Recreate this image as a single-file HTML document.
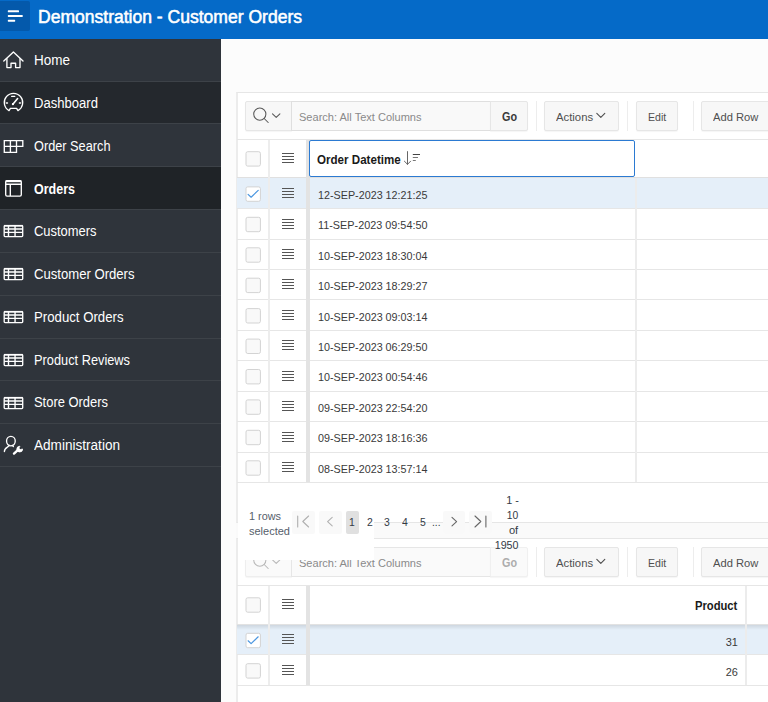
<!DOCTYPE html>
<html lang="en"><head><meta charset="utf-8"><title>Demonstration - Customer Orders</title><style>
html,body{margin:0;padding:0;width:768px;height:702px;overflow:hidden;background:#fcfcfc}
#app{width:768px;height:702px;overflow:hidden;position:relative;background:#fcfcfc;font-family:"Liberation Sans",sans-serif}
.b{position:absolute;display:block}
.t{position:absolute;white-space:pre;display:block}
</style></head>
<body>
<div id="app">
<div class="b" style="left:0px;top:0px;width:768px;height:39px;background:#056ac8"></div>
<div class="b" style="left:0px;top:1px;width:30px;height:30px;background:#0459ab;border-radius:0 2px 2px 0"></div>
<svg class="b" style="left:0;top:0" width="30" height="32" viewBox="0 0 30 32" fill="#fff"><rect x="7.8" y="10.35" width="11.2" height="1.9" rx="0.6"/><rect x="7.8" y="15.05" width="15" height="1.9" rx="0.6"/><rect x="7.8" y="19.8" width="7.4" height="1.9" rx="0.6"/></svg>
<span class="t" style="left:38.2px;transform-origin:0 50%;top:4.80px;font-size:18px;line-height:25px;color:#fff;transform:scaleX(0.9738);-webkit-text-stroke:0.55px #fff;">Demonstration - Customer Orders</span>
<div class="b" style="left:0px;top:39px;width:221px;height:663px;background:#2f343b"></div>
<div class="b" style="left:0px;top:82px;width:221px;height:41px;background:#24282d"></div>
<div class="b" style="left:0px;top:167px;width:221px;height:42px;background:#1f2327"></div>
<div class="b" style="left:0px;top:81px;width:221px;height:1px;background:#3d4248"></div>
<div class="b" style="left:0px;top:123px;width:221px;height:1px;background:#3d4248"></div>
<div class="b" style="left:0px;top:166px;width:221px;height:1px;background:#3d4248"></div>
<div class="b" style="left:0px;top:209px;width:221px;height:1px;background:#3d4248"></div>
<div class="b" style="left:0px;top:252px;width:221px;height:1px;background:#3d4248"></div>
<div class="b" style="left:0px;top:295px;width:221px;height:1px;background:#3d4248"></div>
<div class="b" style="left:0px;top:338px;width:221px;height:1px;background:#3d4248"></div>
<div class="b" style="left:0px;top:380px;width:221px;height:1px;background:#3d4248"></div>
<div class="b" style="left:0px;top:423px;width:221px;height:1px;background:#3d4248"></div>
<div class="b" style="left:0px;top:466px;width:221px;height:1px;background:#3d4248"></div>
<span class="t" style="left:33.8px;transform-origin:0 50%;top:50.40px;font-size:14px;line-height:20px;color:#fff;transform:scaleX(0.9636);">Home</span>
<span class="t" style="left:33.8px;transform-origin:0 50%;top:92.80px;font-size:14px;line-height:20px;color:#fff;transform:scaleX(0.9343);">Dashboard</span>
<span class="t" style="left:33.8px;transform-origin:0 50%;top:135.60px;font-size:14px;line-height:20px;color:#fff;transform:scaleX(0.9102);">Order Search</span>
<span class="t" style="left:33.8px;transform-origin:0 50%;top:178.60px;font-size:14px;line-height:20px;color:#fff;font-weight:bold;transform:scaleX(0.8928);">Orders</span>
<span class="t" style="left:33.8px;transform-origin:0 50%;top:221.20px;font-size:14px;line-height:20px;color:#fff;transform:scaleX(0.9234);">Customers</span>
<span class="t" style="left:33.8px;transform-origin:0 50%;top:264.00px;font-size:14px;line-height:20px;color:#fff;transform:scaleX(0.9361);">Customer Orders</span>
<span class="t" style="left:33.8px;transform-origin:0 50%;top:306.80px;font-size:14px;line-height:20px;color:#fff;transform:scaleX(0.9427);">Product Orders</span>
<span class="t" style="left:33.8px;transform-origin:0 50%;top:349.60px;font-size:14px;line-height:20px;color:#fff;transform:scaleX(0.9139);">Product Reviews</span>
<span class="t" style="left:33.8px;transform-origin:0 50%;top:392.40px;font-size:14px;line-height:20px;color:#fff;transform:scaleX(0.9234);">Store Orders</span>
<span class="t" style="left:33.8px;transform-origin:0 50%;top:435.00px;font-size:14px;line-height:20px;color:#fff;transform:scaleX(0.9695);">Administration</span>
<svg class="b" style="left:0px;top:46px" width="30" height="30" viewBox="0 0 30 30" fill="none" stroke="#fff" stroke-width="1.35" stroke-linecap="round" stroke-linejoin="round" ><path d="M3.8 15 L13.4 6 L23 15"/><path d="M6.9 12.6 V21.6 H11 V17.2 H15.6 V21.6 H20 V12.6"/></svg>
<svg class="b" style="left:0px;top:88px" width="30" height="30" viewBox="0 0 30 30" fill="none" stroke="#fff" stroke-width="1.35" stroke-linecap="round" stroke-linejoin="round" ><path d="M9 22.6 A9.2 9.2 0 1 1 18 22.6 L16.6 20.3 H10.4 Z"/><path d="M12.9 16.2 L17.6 10.6" stroke-width="1.6"/><circle cx="12.9" cy="16.2" r="1.1" fill="#fff" stroke="none"/><path d="M11.7 8.4 H14.7 M6.4 15 H7.5 M19.4 15 H20.5"/></svg>
<svg class="b" style="left:0px;top:131px" width="30" height="30" viewBox="0 0 30 30" fill="none" stroke="#fff" stroke-width="1.35" stroke-linecap="round" stroke-linejoin="round" ><path d="M4.3 9.6 H22.8 V15.3 H16.5 V21.4 H4.3 Z M4.3 15.3 H16.5 M10.4 9.6 V21.4 M16.5 9.6 V15.3" stroke-linejoin="miter"/></svg>
<svg class="b" style="left:0px;top:174px" width="30" height="30" viewBox="0 0 30 30" fill="none" stroke="#fff" stroke-width="1.35" stroke-linecap="round" stroke-linejoin="round" ><rect x="5.7" y="6.7" width="15.6" height="15.4" rx="1.4"/><path d="M5.7 7.2 H21.3" stroke-width="2" stroke-linecap="butt"/><path d="M5.7 10.2 H21.3 M10.3 10.2 V22" stroke-linecap="butt"/></svg>
<svg class="b" style="left:0px;top:216.4px" width="30" height="30" viewBox="0 0 30 30" fill="none" stroke="#fff" stroke-width="1.35" stroke-linecap="round" stroke-linejoin="round" ><rect x="4.2" y="9.6" width="18.5" height="11" rx="0.8"/><path d="M4.2 9.75 H22.7" stroke-width="1.7" stroke-linecap="butt"/><path d="M4.2 13.05 H22.7 M4.2 16.35 H22.7 M8.5 9.6 V20.6 M15.05 9.6 V20.6" stroke-linecap="butt" stroke-width="1.4"/></svg>
<svg class="b" style="left:0px;top:259.2px" width="30" height="30" viewBox="0 0 30 30" fill="none" stroke="#fff" stroke-width="1.35" stroke-linecap="round" stroke-linejoin="round" ><rect x="4.2" y="9.6" width="18.5" height="11" rx="0.8"/><path d="M4.2 9.75 H22.7" stroke-width="1.7" stroke-linecap="butt"/><path d="M4.2 13.05 H22.7 M4.2 16.35 H22.7 M8.5 9.6 V20.6 M15.05 9.6 V20.6" stroke-linecap="butt" stroke-width="1.4"/></svg>
<svg class="b" style="left:0px;top:302px" width="30" height="30" viewBox="0 0 30 30" fill="none" stroke="#fff" stroke-width="1.35" stroke-linecap="round" stroke-linejoin="round" ><rect x="4.2" y="9.6" width="18.5" height="11" rx="0.8"/><path d="M4.2 9.75 H22.7" stroke-width="1.7" stroke-linecap="butt"/><path d="M4.2 13.05 H22.7 M4.2 16.35 H22.7 M8.5 9.6 V20.6 M15.05 9.6 V20.6" stroke-linecap="butt" stroke-width="1.4"/></svg>
<svg class="b" style="left:0px;top:344.8px" width="30" height="30" viewBox="0 0 30 30" fill="none" stroke="#fff" stroke-width="1.35" stroke-linecap="round" stroke-linejoin="round" ><rect x="4.2" y="9.6" width="18.5" height="11" rx="0.8"/><path d="M4.2 9.75 H22.7" stroke-width="1.7" stroke-linecap="butt"/><path d="M4.2 13.05 H22.7 M4.2 16.35 H22.7 M8.5 9.6 V20.6 M15.05 9.6 V20.6" stroke-linecap="butt" stroke-width="1.4"/></svg>
<svg class="b" style="left:0px;top:387.5px" width="30" height="30" viewBox="0 0 30 30" fill="none" stroke="#fff" stroke-width="1.35" stroke-linecap="round" stroke-linejoin="round" ><rect x="4.2" y="9.6" width="18.5" height="11" rx="0.8"/><path d="M4.2 9.75 H22.7" stroke-width="1.7" stroke-linecap="butt"/><path d="M4.2 13.05 H22.7 M4.2 16.35 H22.7 M8.5 9.6 V20.6 M15.05 9.6 V20.6" stroke-linecap="butt" stroke-width="1.4"/></svg>
<svg class="b" style="left:0px;top:430px" width="30" height="30" viewBox="0 0 30 30" fill="none" stroke="#fff" stroke-width="1.35" stroke-linecap="round" stroke-linejoin="round" ><ellipse cx="10.9" cy="11.1" rx="4.35" ry="4.75"/><path d="M9.2 15.4 C8.6 17.4 4.4 17.2 4.4 21.6"/><path d="M12.4 15.4 L13.4 16.6"/><path d="M14 23.6 L18.6 19.4" stroke-width="2.4"/><path d="M19.6 16.2 A2.9 2.9 0 1 0 22.6 19 L20.2 19.6 L19 18.4 Z" fill="#fff" stroke-width="0.8"/></svg>
<div class="b" style="left:221px;top:39px;width:547px;height:663px;background:#fcfcfc"></div>
<div class="b" style="left:236px;top:92px;width:540px;height:431px;background:#fff;border:1px solid #e6e6e6;border-left:2px solid #ececec;box-sizing:border-box"></div>
<div class="b" style="left:236px;top:523px;width:540px;height:15px;background:#fafafa"></div>
<div class="b" style="left:236px;top:538px;width:540px;height:200px;background:#fff;border:1px solid #e6e6e6;border-left:2px solid #ececec;box-sizing:border-box"></div>
<div class="b" style="left:245px;top:101px;width:47px;height:30px;background:#f7f7f7;border:1px solid #e6e6e6;box-sizing:border-box;box-shadow:0 1px 1px rgba(0,0,0,.04);border-radius:2px 0 0 2px"></div>
<div class="b" style="left:291px;top:101px;width:200px;height:30px;background:#f9f9f9;border:1px solid #dfdfdf;box-sizing:border-box"></div>
<div class="b" style="left:490px;top:101px;width:38px;height:30px;background:#f7f7f7;border:1px solid #e6e6e6;box-sizing:border-box;box-shadow:0 1px 1px rgba(0,0,0,.04);border-radius:0 2px 2px 0"></div>
<svg class="b" style="left:245px;top:101px" width="47" height="30" viewBox="0 0 47 30" fill="none" stroke="#585858" stroke-width="1.05" stroke-linecap="round" stroke-linejoin="round"><circle cx="14.8" cy="13.1" r="6.1"/><path d="M19.2 17.5 L23.2 21.5"/><path d="M27.5 12.8 L31.2 16.4 L34.9 12.8"/></svg>
<span class="t" style="left:298.7px;transform-origin:0 50%;top:109.40px;font-size:11.6px;line-height:16px;color:#8a8a8a;transform:scaleX(0.9520);">Search: All Text Columns</span>
<span class="t" style="left:501.5px;transform-origin:0 50%;top:108.80px;font-size:12px;line-height:17px;color:#3a3a3a;font-weight:bold;transform:scaleX(0.8997);">Go</span>
<div class="b" style="left:536px;top:101px;width:1px;height:30px;background:#ededed"></div>
<div class="b" style="left:627px;top:101px;width:1px;height:30px;background:#ededed"></div>
<div class="b" style="left:693px;top:101px;width:1px;height:30px;background:#ededed"></div>
<div class="b" style="left:544px;top:101px;width:75px;height:30px;background:#f7f7f7;border:1px solid #e6e6e6;box-sizing:border-box;box-shadow:0 1px 1px rgba(0,0,0,.04);border-radius:2px"></div>
<span class="t" style="left:555.8px;transform-origin:0 50%;top:109.40px;font-size:11.6px;line-height:16px;color:#4f4f4f;transform:scaleX(0.9755);">Actions</span>
<svg class="b" style="left:595px;top:110px" width="12" height="12" viewBox="0 0 12 12" fill="none" stroke="#4d4d4d" stroke-width="1.1" stroke-linecap="round" stroke-linejoin="round"><path d="M1.8 3.4 L5.8 7.4 L9.8 3.4"/></svg>
<div class="b" style="left:636px;top:101px;width:42px;height:30px;background:#f7f7f7;border:1px solid #e6e6e6;box-sizing:border-box;box-shadow:0 1px 1px rgba(0,0,0,.04);border-radius:2px"></div>
<span class="t" style="left:647.7px;transform-origin:0 50%;top:109.40px;font-size:11.6px;line-height:16px;color:#4f4f4f;transform:scaleX(0.9107);">Edit</span>
<div class="b" style="left:701px;top:101px;width:80px;height:30px;background:#f7f7f7;border:1px solid #e6e6e6;box-sizing:border-box;box-shadow:0 1px 1px rgba(0,0,0,.04);border-radius:2px"></div>
<span class="t" style="left:713.3px;transform-origin:0 50%;top:109.40px;font-size:11.6px;line-height:16px;color:#4f4f4f;transform:scaleX(0.9629);">Add Row</span>
<div class="b" style="left:237px;top:139px;width:540px;height:1px;background:#e6e6e6"></div>
<div class="b" style="left:237px;top:177px;width:540px;height:1px;background:#e0e0e0"></div>
<div class="b" style="left:237px;top:178px;width:540px;height:30px;background:#e5eff9"></div>
<div class="b" style="left:237px;top:208px;width:540px;height:1px;background:#e6e6e6"></div>
<div class="b" style="left:237px;top:239px;width:540px;height:1px;background:#e6e6e6"></div>
<div class="b" style="left:237px;top:269px;width:540px;height:1px;background:#e6e6e6"></div>
<div class="b" style="left:237px;top:299px;width:540px;height:1px;background:#e6e6e6"></div>
<div class="b" style="left:237px;top:330px;width:540px;height:1px;background:#e6e6e6"></div>
<div class="b" style="left:237px;top:360px;width:540px;height:1px;background:#e6e6e6"></div>
<div class="b" style="left:237px;top:391px;width:540px;height:1px;background:#e6e6e6"></div>
<div class="b" style="left:237px;top:421px;width:540px;height:1px;background:#e6e6e6"></div>
<div class="b" style="left:237px;top:452px;width:540px;height:1px;background:#e6e6e6"></div>
<div class="b" style="left:237px;top:482px;width:540px;height:1px;background:#e6e6e6"></div>
<div class="b" style="left:268px;top:140px;width:2px;height:342px;background:#ededed"></div>
<div class="b" style="left:306px;top:140px;width:4px;height:342px;background:#e3e3e3"></div>
<div class="b" style="left:635px;top:178px;width:2px;height:304px;background:#ececec"></div>
<div class="b" style="left:309px;top:140px;width:326px;height:37px;background:#fff;border:1px solid #2b7ad2;border-radius:2px;box-sizing:border-box"></div>
<svg class="b" style="left:244px;top:150px" width="19" height="19" viewBox="0 0 19 19"><rect x="2.00" y="1.70" width="14.4" height="14.4" rx="1.7" fill="#f9f9f9" stroke="#d3d3d3" stroke-width="1"/></svg>
<div class="b" style="left:282px;top:153px;width:12px;height:1px;background:#555"></div><div class="b" style="left:282px;top:156px;width:12px;height:1px;background:#555"></div><div class="b" style="left:282px;top:159px;width:12px;height:1px;background:#555"></div><div class="b" style="left:282px;top:162px;width:12px;height:1px;background:#555"></div>
<span class="t" style="left:317px;transform-origin:0 50%;top:151.50px;font-size:12px;line-height:17px;color:#1a1a1a;font-weight:bold;transform:scaleX(0.9654);">Order Datetime</span>
<svg class="b" style="left:402px;top:151px" width="20" height="15" viewBox="0 0 20 15" fill="none" stroke="#666" stroke-width="1" stroke-linecap="round" stroke-linejoin="round"><path d="M5.5 0.6 V13.3 M2.4 10.2 L5.5 13.3 L8.6 10.2"/><path d="M11.2 3.5 H17.6" stroke="#444"/><path d="M11.2 6.5 H15.6 M11.2 9.5 H13.4" stroke="#777"/></svg>
<svg class="b" style="left:244px;top:185px" width="19" height="19" viewBox="0 0 19 19"><rect x="2.00" y="1.90" width="14.4" height="14.4" rx="1.7" fill="#fff" stroke="#d3d3d3" stroke-width="1"/><path transform="translate(1.50,1.40)" d="M2.6 8.0 L5.6 10.8 L12.7 4.0" fill="none" stroke="#4a96e0" stroke-width="1.2" stroke-linecap="round" stroke-linejoin="round"/></svg>
<div class="b" style="left:282px;top:188px;width:12px;height:1px;background:#555"></div><div class="b" style="left:282px;top:191px;width:12px;height:1px;background:#555"></div><div class="b" style="left:282px;top:194px;width:12px;height:1px;background:#555"></div><div class="b" style="left:282px;top:197px;width:12px;height:1px;background:#555"></div>
<span class="t" style="left:318.4px;transform-origin:0 50%;top:186.80px;font-size:11.6px;line-height:16px;color:#3a3a3a;transform:scaleX(0.9282);">12-SEP-2023 12:21:25</span>
<svg class="b" style="left:244px;top:215px" width="19" height="19" viewBox="0 0 19 19"><rect x="2.00" y="2.30" width="14.4" height="14.4" rx="1.7" fill="#f9f9f9" stroke="#d3d3d3" stroke-width="1"/></svg>
<div class="b" style="left:282px;top:219px;width:12px;height:1px;background:#555"></div><div class="b" style="left:282px;top:222px;width:12px;height:1px;background:#555"></div><div class="b" style="left:282px;top:225px;width:12px;height:1px;background:#555"></div><div class="b" style="left:282px;top:228px;width:12px;height:1px;background:#555"></div>
<span class="t" style="left:318.4px;transform-origin:0 50%;top:217.23px;font-size:11.6px;line-height:16px;color:#3a3a3a;transform:scaleX(0.9350);">11-SEP-2023 09:54:50</span>
<svg class="b" style="left:244px;top:246px" width="19" height="19" viewBox="0 0 19 19"><rect x="2.00" y="1.80" width="14.4" height="14.4" rx="1.7" fill="#f9f9f9" stroke="#d3d3d3" stroke-width="1"/></svg>
<div class="b" style="left:282px;top:249px;width:12px;height:1px;background:#555"></div><div class="b" style="left:282px;top:252px;width:12px;height:1px;background:#555"></div><div class="b" style="left:282px;top:255px;width:12px;height:1px;background:#555"></div><div class="b" style="left:282px;top:258px;width:12px;height:1px;background:#555"></div>
<span class="t" style="left:318.4px;transform-origin:0 50%;top:247.66px;font-size:11.6px;line-height:16px;color:#3a3a3a;transform:scaleX(0.9282);">10-SEP-2023 18:30:04</span>
<svg class="b" style="left:244px;top:276px" width="19" height="19" viewBox="0 0 19 19"><rect x="2.00" y="2.20" width="14.4" height="14.4" rx="1.7" fill="#f9f9f9" stroke="#d3d3d3" stroke-width="1"/></svg>
<div class="b" style="left:282px;top:279px;width:12px;height:1px;background:#555"></div><div class="b" style="left:282px;top:282px;width:12px;height:1px;background:#555"></div><div class="b" style="left:282px;top:285px;width:12px;height:1px;background:#555"></div><div class="b" style="left:282px;top:288px;width:12px;height:1px;background:#555"></div>
<span class="t" style="left:318.4px;transform-origin:0 50%;top:278.09px;font-size:11.6px;line-height:16px;color:#3a3a3a;transform:scaleX(0.9282);">10-SEP-2023 18:29:27</span>
<svg class="b" style="left:244px;top:307px" width="19" height="19" viewBox="0 0 19 19"><rect x="2.00" y="1.60" width="14.4" height="14.4" rx="1.7" fill="#f9f9f9" stroke="#d3d3d3" stroke-width="1"/></svg>
<div class="b" style="left:282px;top:310px;width:12px;height:1px;background:#555"></div><div class="b" style="left:282px;top:313px;width:12px;height:1px;background:#555"></div><div class="b" style="left:282px;top:316px;width:12px;height:1px;background:#555"></div><div class="b" style="left:282px;top:319px;width:12px;height:1px;background:#555"></div>
<span class="t" style="left:318.4px;transform-origin:0 50%;top:308.52px;font-size:11.6px;line-height:16px;color:#3a3a3a;transform:scaleX(0.9282);">10-SEP-2023 09:03:14</span>
<svg class="b" style="left:244px;top:337px" width="19" height="19" viewBox="0 0 19 19"><rect x="2.00" y="2.10" width="14.4" height="14.4" rx="1.7" fill="#f9f9f9" stroke="#d3d3d3" stroke-width="1"/></svg>
<div class="b" style="left:282px;top:340px;width:12px;height:1px;background:#555"></div><div class="b" style="left:282px;top:343px;width:12px;height:1px;background:#555"></div><div class="b" style="left:282px;top:346px;width:12px;height:1px;background:#555"></div><div class="b" style="left:282px;top:349px;width:12px;height:1px;background:#555"></div>
<span class="t" style="left:318.4px;transform-origin:0 50%;top:338.95px;font-size:11.6px;line-height:16px;color:#3a3a3a;transform:scaleX(0.9282);">10-SEP-2023 06:29:50</span>
<svg class="b" style="left:244px;top:368px" width="19" height="19" viewBox="0 0 19 19"><rect x="2.00" y="1.50" width="14.4" height="14.4" rx="1.7" fill="#f9f9f9" stroke="#d3d3d3" stroke-width="1"/></svg>
<div class="b" style="left:282px;top:371px;width:12px;height:1px;background:#555"></div><div class="b" style="left:282px;top:374px;width:12px;height:1px;background:#555"></div><div class="b" style="left:282px;top:377px;width:12px;height:1px;background:#555"></div><div class="b" style="left:282px;top:380px;width:12px;height:1px;background:#555"></div>
<span class="t" style="left:318.4px;transform-origin:0 50%;top:369.38px;font-size:11.6px;line-height:16px;color:#3a3a3a;transform:scaleX(0.9282);">10-SEP-2023 00:54:46</span>
<svg class="b" style="left:244px;top:398px" width="19" height="19" viewBox="0 0 19 19"><rect x="2.00" y="1.90" width="14.4" height="14.4" rx="1.7" fill="#f9f9f9" stroke="#d3d3d3" stroke-width="1"/></svg>
<div class="b" style="left:282px;top:401px;width:12px;height:1px;background:#555"></div><div class="b" style="left:282px;top:404px;width:12px;height:1px;background:#555"></div><div class="b" style="left:282px;top:407px;width:12px;height:1px;background:#555"></div><div class="b" style="left:282px;top:410px;width:12px;height:1px;background:#555"></div>
<span class="t" style="left:318.4px;transform-origin:0 50%;top:399.81px;font-size:11.6px;line-height:16px;color:#3a3a3a;transform:scaleX(0.9282);">09-SEP-2023 22:54:20</span>
<svg class="b" style="left:244px;top:428px" width="19" height="19" viewBox="0 0 19 19"><rect x="2.00" y="2.30" width="14.4" height="14.4" rx="1.7" fill="#f9f9f9" stroke="#d3d3d3" stroke-width="1"/></svg>
<div class="b" style="left:282px;top:432px;width:12px;height:1px;background:#555"></div><div class="b" style="left:282px;top:435px;width:12px;height:1px;background:#555"></div><div class="b" style="left:282px;top:438px;width:12px;height:1px;background:#555"></div><div class="b" style="left:282px;top:441px;width:12px;height:1px;background:#555"></div>
<span class="t" style="left:318.4px;transform-origin:0 50%;top:430.24px;font-size:11.6px;line-height:16px;color:#3a3a3a;transform:scaleX(0.9282);">09-SEP-2023 18:16:36</span>
<svg class="b" style="left:244px;top:459px" width="19" height="19" viewBox="0 0 19 19"><rect x="2.00" y="1.80" width="14.4" height="14.4" rx="1.7" fill="#f9f9f9" stroke="#d3d3d3" stroke-width="1"/></svg>
<div class="b" style="left:282px;top:462px;width:12px;height:1px;background:#555"></div><div class="b" style="left:282px;top:465px;width:12px;height:1px;background:#555"></div><div class="b" style="left:282px;top:468px;width:12px;height:1px;background:#555"></div><div class="b" style="left:282px;top:471px;width:12px;height:1px;background:#555"></div>
<span class="t" style="left:318.4px;transform-origin:0 50%;top:460.67px;font-size:11.6px;line-height:16px;color:#3a3a3a;transform:scaleX(0.9282);">08-SEP-2023 13:57:14</span>
<div class="b" style="left:245px;top:547px;width:47px;height:30px;background:#fafafa;border:1px solid #eeeeee;box-sizing:border-box;box-shadow:0 1px 1px rgba(0,0,0,.04);border-radius:2px 0 0 2px"></div>
<div class="b" style="left:291px;top:547px;width:200px;height:30px;background:#fafafa;border:1px solid #e6e6e6;box-sizing:border-box"></div>
<div class="b" style="left:490px;top:547px;width:38px;height:30px;background:#fafafa;border:1px solid #f0f0f0;box-sizing:border-box;box-shadow:0 1px 1px rgba(0,0,0,.04);border-radius:0 2px 2px 0"></div>
<svg class="b" style="left:245px;top:547px" width="47" height="30" viewBox="0 0 47 30" fill="none" stroke="#b8b8b8" stroke-width="1.05" stroke-linecap="round" stroke-linejoin="round"><circle cx="14.8" cy="13.1" r="6.1"/><path d="M19.2 17.5 L23.2 21.5"/><path d="M27.5 12.8 L31.2 16.4 L34.9 12.8"/></svg>
<span class="t" style="left:298.7px;transform-origin:0 50%;top:555.40px;font-size:11.6px;line-height:16px;color:#8a8a8a;transform:scaleX(0.9520);">Search: All Text Columns</span>
<span class="t" style="left:501.5px;transform-origin:0 50%;top:554.80px;font-size:12px;line-height:17px;color:#adadad;font-weight:bold;transform:scaleX(0.8997);">Go</span>
<div class="b" style="left:536px;top:547px;width:1px;height:30px;background:#ededed"></div>
<div class="b" style="left:627px;top:547px;width:1px;height:30px;background:#ededed"></div>
<div class="b" style="left:693px;top:547px;width:1px;height:30px;background:#ededed"></div>
<div class="b" style="left:544px;top:547px;width:75px;height:30px;background:#f7f7f7;border:1px solid #e6e6e6;box-sizing:border-box;box-shadow:0 1px 1px rgba(0,0,0,.04);border-radius:2px"></div>
<span class="t" style="left:555.8px;transform-origin:0 50%;top:555.40px;font-size:11.6px;line-height:16px;color:#4f4f4f;transform:scaleX(0.9755);">Actions</span>
<svg class="b" style="left:595px;top:556px" width="12" height="12" viewBox="0 0 12 12" fill="none" stroke="#4d4d4d" stroke-width="1.1" stroke-linecap="round" stroke-linejoin="round"><path d="M1.8 3.4 L5.8 7.4 L9.8 3.4"/></svg>
<div class="b" style="left:636px;top:547px;width:42px;height:30px;background:#f7f7f7;border:1px solid #e6e6e6;box-sizing:border-box;box-shadow:0 1px 1px rgba(0,0,0,.04);border-radius:2px"></div>
<span class="t" style="left:647.7px;transform-origin:0 50%;top:555.40px;font-size:11.6px;line-height:16px;color:#4f4f4f;transform:scaleX(0.9107);">Edit</span>
<div class="b" style="left:701px;top:547px;width:80px;height:30px;background:#f7f7f7;border:1px solid #e6e6e6;box-sizing:border-box;box-shadow:0 1px 1px rgba(0,0,0,.04);border-radius:2px"></div>
<span class="t" style="left:713.3px;transform-origin:0 50%;top:555.40px;font-size:11.6px;line-height:16px;color:#4f4f4f;transform:scaleX(0.9629);">Add Row</span>
<div class="b" style="left:237px;top:585px;width:540px;height:1px;background:#e6e6e6"></div>
<div class="b" style="left:237px;top:624px;width:540px;height:1px;background:#e2e2e2"></div>
<div class="b" style="left:237px;top:625px;width:540px;height:30px;background:#e5eff9"></div>
<div class="b" style="left:237px;top:625px;width:540px;height:5px;background:linear-gradient(rgba(0,0,0,.10),rgba(0,0,0,0))"></div>
<div class="b" style="left:237px;top:654px;width:540px;height:1px;background:#e6e6e6"></div>
<div class="b" style="left:237px;top:685px;width:540px;height:1px;background:#e6e6e6"></div>
<div class="b" style="left:268px;top:586px;width:2px;height:99px;background:#ededed"></div>
<div class="b" style="left:306px;top:586px;width:4px;height:99px;background:#e3e3e3"></div>
<div class="b" style="left:745px;top:586px;width:2px;height:99px;background:#ececec"></div>
<svg class="b" style="left:244px;top:596px" width="19" height="19" viewBox="0 0 19 19"><rect x="2.00" y="1.80" width="14.4" height="14.4" rx="1.7" fill="#f9f9f9" stroke="#d3d3d3" stroke-width="1"/></svg>
<div class="b" style="left:282px;top:599px;width:12px;height:1px;background:#555"></div><div class="b" style="left:282px;top:602px;width:12px;height:1px;background:#555"></div><div class="b" style="left:282px;top:605px;width:12px;height:1px;background:#555"></div><div class="b" style="left:282px;top:608px;width:12px;height:1px;background:#555"></div>
<svg class="b" style="left:244px;top:631px" width="19" height="19" viewBox="0 0 19 19"><rect x="2.00" y="2.30" width="14.4" height="14.4" rx="1.7" fill="#fff" stroke="#d3d3d3" stroke-width="1"/><path transform="translate(1.50,1.80)" d="M2.6 8.0 L5.6 10.8 L12.7 4.0" fill="none" stroke="#4a96e0" stroke-width="1.2" stroke-linecap="round" stroke-linejoin="round"/></svg>
<div class="b" style="left:282px;top:634px;width:12px;height:1px;background:#555"></div><div class="b" style="left:282px;top:637px;width:12px;height:1px;background:#555"></div><div class="b" style="left:282px;top:640px;width:12px;height:1px;background:#555"></div><div class="b" style="left:282px;top:643px;width:12px;height:1px;background:#555"></div>
<svg class="b" style="left:244px;top:662px" width="19" height="19" viewBox="0 0 19 19"><rect x="2.00" y="1.70" width="14.4" height="14.4" rx="1.7" fill="#f9f9f9" stroke="#d3d3d3" stroke-width="1"/></svg>
<div class="b" style="left:282px;top:665px;width:12px;height:1px;background:#555"></div><div class="b" style="left:282px;top:668px;width:12px;height:1px;background:#555"></div><div class="b" style="left:282px;top:671px;width:12px;height:1px;background:#555"></div><div class="b" style="left:282px;top:674px;width:12px;height:1px;background:#555"></div>
<span class="t" style="right:30.299999999999955px;transform-origin:100% 50%;top:598.00px;font-size:12px;line-height:17px;color:#1a1a1a;font-weight:bold;transform:scaleX(0.9351);">Product</span>
<span class="t" style="right:30.5px;transform-origin:100% 50%;top:633.50px;font-size:11.6px;line-height:16px;color:#3a3a3a;transform:scaleX(0.9453);">31</span>
<span class="t" style="right:30.5px;transform-origin:100% 50%;top:663.70px;font-size:11.6px;line-height:16px;color:#3a3a3a;transform:scaleX(0.9453);">26</span>
<div class="b" style="left:238px;top:484px;width:136px;height:76px;background:#fff"></div>
<div class="b" style="left:374px;top:484px;width:402px;height:38px;background:#fff"></div>
<div class="b" style="left:374px;top:522px;width:402px;height:1px;background:#e6e6e6"></div>
<span class="t" style="left:248.5px;transform-origin:0 50%;top:508.60px;font-size:11px;line-height:15px;color:#56606b;transform:scaleX(0.9875);">1 rows</span>
<span class="t" style="left:248.5px;transform-origin:0 50%;top:523.70px;font-size:11px;line-height:15px;color:#56606b;transform:scaleX(1.0004);">selected</span>
<div class="b" style="left:292px;top:511px;width:23px;height:23px;background:#f9f9f9;border-radius:2px"></div>
<div class="b" style="left:319px;top:511px;width:23px;height:23px;background:#f9f9f9;border-radius:2px"></div>
<div class="b" style="left:345.5px;top:511px;width:13.5px;height:22.5px;background:#e0e0e0;border-radius:2px"></div>
<div class="b" style="left:442.7px;top:511px;width:22.5px;height:22.5px;background:#f9f9f9;border-radius:2px"></div>
<div class="b" style="left:469.4px;top:511px;width:22.5px;height:22.5px;background:#f9f9f9;border-radius:2px"></div>
<svg class="b" style="left:292px;top:511px" width="23" height="23" viewBox="0 0 23 23" fill="none" stroke="#b0b0b0" stroke-width="1.1" stroke-linecap="round" stroke-linejoin="round"><path d="M5.7 5 V16 M16.6 5 L10.8 10.5 L16.6 16"/></svg>
<svg class="b" style="left:319px;top:511px" width="23" height="23" viewBox="0 0 23 23" fill="none" stroke="#b0b0b0" stroke-width="1.1" stroke-linecap="round" stroke-linejoin="round"><path d="M13.2 6.3 L8.6 10.6 L13.2 14.9"/></svg>
<svg class="b" style="left:442.7px;top:511px" width="23" height="23" viewBox="0 0 23 23" fill="none" stroke="#666" stroke-width="1.1" stroke-linecap="round" stroke-linejoin="round"><path d="M9 6.3 L13.6 10.6 L9 14.9"/></svg>
<svg class="b" style="left:469.4px;top:511px" width="23" height="23" viewBox="0 0 23 23" fill="none" stroke="#666" stroke-width="1.1" stroke-linecap="round" stroke-linejoin="round"><path d="M6 5 L11.8 10.5 L6 16 M16.9 5 V16"/></svg>
<span class="t" style="left:349.1px;transform-origin:0 50%;top:515.10px;font-size:11px;line-height:15px;color:#333a45;transform:scaleX(0.9469);">1</span>
<span class="t" style="left:366.5px;transform-origin:0 50%;top:515.10px;font-size:11px;line-height:15px;color:#333a45;transform:scaleX(0.9469);">2</span>
<span class="t" style="left:383.6px;transform-origin:0 50%;top:515.10px;font-size:11px;line-height:15px;color:#333a45;transform:scaleX(0.9469);">3</span>
<span class="t" style="left:401.5px;transform-origin:0 50%;top:515.10px;font-size:11px;line-height:15px;color:#333a45;transform:scaleX(0.9469);">4</span>
<span class="t" style="left:419.5px;transform-origin:0 50%;top:515.10px;font-size:11px;line-height:15px;color:#333a45;transform:scaleX(0.9469);">5</span>
<span class="t" style="left:431.8px;transform-origin:0 50%;top:515.10px;font-size:11px;line-height:15px;color:#333a45;transform:scaleX(0.9267);">...</span>
<span class="t" style="right:249.39999999999998px;transform-origin:100% 50%;top:492.50px;font-size:11px;line-height:15px;color:#333a45;transform:scaleX(0.9888);">1 -</span>
<span class="t" style="right:249.39999999999998px;transform-origin:100% 50%;top:507.80px;font-size:11px;line-height:15px;color:#333a45;transform:scaleX(0.9388);">10</span>
<span class="t" style="right:249.39999999999998px;transform-origin:100% 50%;top:523.00px;font-size:11px;line-height:15px;color:#333a45;transform:scaleX(1.0122);">of</span>
<span class="t" style="right:249.39999999999998px;transform-origin:100% 50%;top:537.80px;font-size:11px;line-height:15px;color:#333a45;transform:scaleX(0.9720);">1950</span>
</div>
</body></html>
